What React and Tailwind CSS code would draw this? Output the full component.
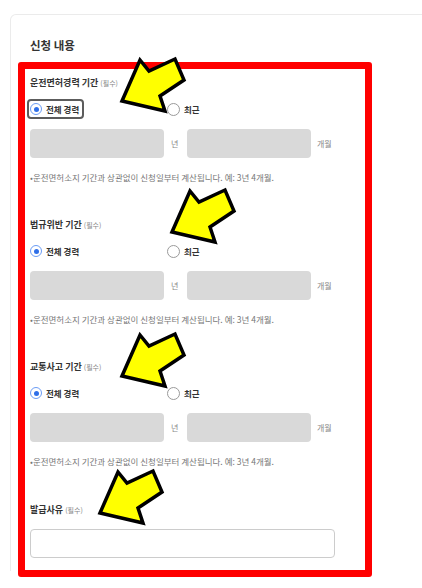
import React from "react";

const sections = [
  { key: "license", title: "운전면허경력 기간", focused: true },
  { key: "violation", title: "법규위반 기간" },
  { key: "accident", title: "교통사고 기간" },
];

function Arrow({ className }) {
  return (
    <svg
      className={`absolute ${className}`}
      width="72"
      height="60"
      viewBox="0 0 72 60"
      fill="none"
    >
      <polygon
        points="4,45 22,4 31,15 57,3 66,24 42,40 47,55"
        fill="#ffff00"
        stroke="#000"
        strokeWidth="3.5"
        strokeLinejoin="miter"
      />
    </svg>
  );
}

function Label({ text }) {
  return (
    <div className="h-[14px] leading-[14px] text-[9px] font-bold text-[#333]">
      {text} <span className="text-[7px] font-normal text-[#888]">(필수)</span>
    </div>
  );
}

function Radio({ checked }) {
  return checked ? (
    <span className="flex h-[12px] w-[12px] items-center justify-center rounded-full border border-[#6b9cf5] bg-white">
      <span className="h-[5px] w-[5px] rounded-full bg-[#2f6fe8]" />
    </span>
  ) : (
    <span className="h-[13px] w-[13px] rounded-full border border-[#9a9a9a] bg-white" />
  );
}

function Section({ title, focused, className }) {
  return (
    <div className={className}>
      <Label text={title} />

      {/* period choice */}
      <div className="mt-[10px] flex h-[18px] items-center">
        <div className="w-[137px]">
          <span
            className={`flex w-fit items-center gap-[4px] py-[2px] ${
              focused
                ? "-ml-[1px] rounded-[2px] pl-[1px] pr-[3px] outline-2 outline-[#5c5c5c]"
                : ""
            }`}
          >
            <Radio checked />
            <span className="text-[8.5px] font-semibold text-[#333]">전체 경력</span>
          </span>
        </div>
        <span className="flex items-center gap-[4px]">
          <Radio />
          <span className="text-[8.5px] font-semibold text-[#333]">최근</span>
        </span>
      </div>

      {/* years / months */}
      <div className="mt-[11px] flex h-[29px] items-center">
        <div className="h-full w-[134px] rounded-[4px] bg-[#d9d9d9]" />
        <span className="ml-[7px] w-[16px] text-[8px] text-[#888]">년</span>
        <div className="h-full w-[124px] rounded-[4px] bg-[#d9d9d9]" />
        <span className="ml-[6px] text-[8px] text-[#888]">개월</span>
      </div>

      <p className="mt-[13px] text-[8.5px] leading-[12px] text-[#777]">
        •운전면허소지 기간과 상관없이 신청일부터 계산됩니다. 예: 3년 4개월.
      </p>
    </div>
  );
}

export default function App() {
  return (
    <div
      className="relative h-[588px] w-[422px] overflow-hidden bg-white"
      style={{ fontFamily: '"Noto Sans CJK KR", "Noto Sans", sans-serif' }}
    >
      {/* Card */}
      <div className="ml-[10px] mt-[14px] h-[557px] w-[440px] rounded-tl-[6px] border border-b-0 border-[#ebebeb] pl-[19px] pt-[21px]">
        <h2 className="h-[18px] text-[11.5px] font-bold leading-[18px] text-[#333]">신청 내용</h2>

        {/* Highlighted form area */}
        <div className="-ml-[12px] mt-[8px] w-[354px] rounded-[3px] border-[7px] border-[#ff0000] pb-[12px] pl-[5px] pt-[7px]">
          {sections.map((s, i) => (
            <Section
              key={s.key}
              title={s.title}
              focused={s.focused}
              className={i === 0 ? "" : "mt-[35px]"}
            />
          ))}

          <div className="mt-[36px]">
            <Label text="발급사유" />
            <div className="mt-[12px] h-[29px] w-[305px] rounded-[4px] border border-[#cccccc] bg-white" />
          </div>
        </div>
      </div>

      {/* Annotation arrows */}
      <Arrow className="left-[118px] top-[56px]" />
      <Arrow className="left-[168px] top-[187px]" />
      <Arrow className="left-[118px] top-[331px]" />
      <Arrow className="left-[96px] top-[468px]" />
    </div>
  );
}
